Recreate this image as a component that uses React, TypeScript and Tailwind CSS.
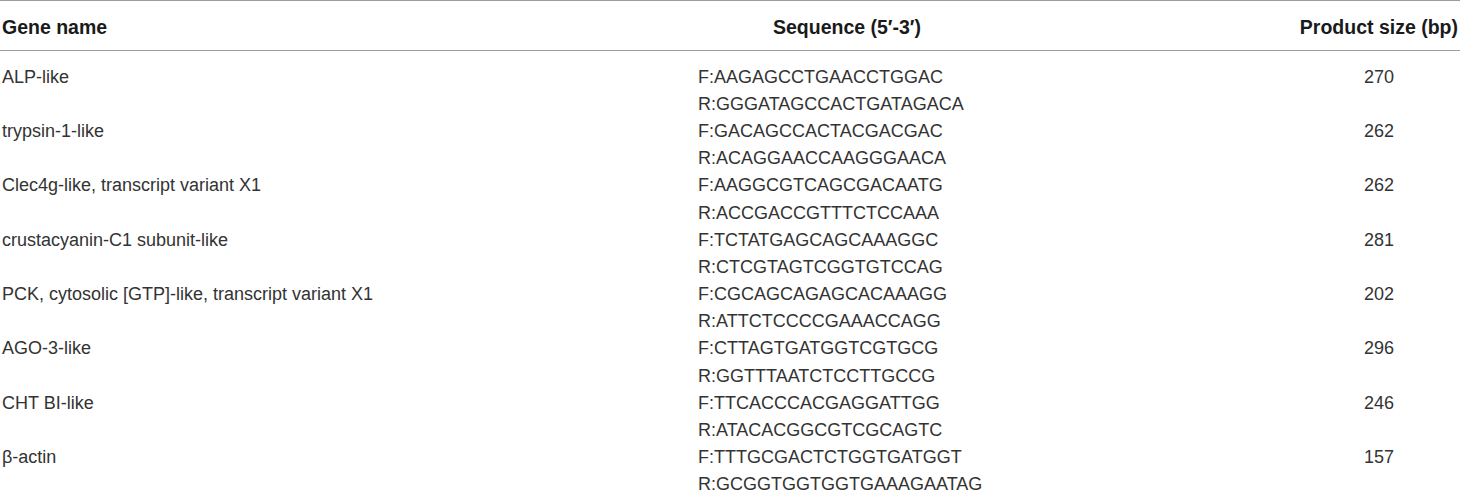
const rows = [
  { gene: "ALP-like", f: "F:AAGAGCCTGAACCTGGAC", r: "R:GGGATAGCCACTGATAGACA", size: "270" },
  { gene: "trypsin-1-like", f: "F:GACAGCCACTACGACGAC", r: "R:ACAGGAACCAAGGGAACA", size: "262" },
  { gene: "Clec4g-like, transcript variant X1", f: "F:AAGGCGTCAGCGACAATG", r: "R:ACCGACCGTTTCTCCAAA", size: "262" },
  { gene: "crustacyanin-C1 subunit-like", f: "F:TCTATGAGCAGCAAAGGC", r: "R:CTCGTAGTCGGTGTCCAG", size: "281" },
  { gene: "PCK, cytosolic [GTP]-like, transcript variant X1", f: "F:CGCAGCAGAGCACAAAGG", r: "R:ATTCTCCCCGAAACCAGG", size: "202" },
  { gene: "AGO-3-like", f: "F:CTTAGTGATGGTCGTGCG", r: "R:GGTTTAATCTCCTTGCCG", size: "296" },
  { gene: "CHT BI-like", f: "F:TTCACCCACGAGGATTGG", r: "R:ATACACGGCGTCGCAGTC", size: "246" },
  { gene: "β-actin", f: "F:TTTGCGACTCTGGTGATGGT", r: "R:GCGGTGGTGGTGAAAGAATAG", size: "157" },
];

function Line({ children }: { children: React.ReactNode }) {
  return <div className="h-[27.2px] flex items-center leading-[20px]">{children}</div>;
}

export default function App() {
  return (
    <div className="w-[1460px] h-[496px] bg-white overflow-hidden font-['Liberation_Sans',Arial,sans-serif]">
      <div className="h-px bg-[#9c9c9c]" />
      <div className="flex h-[49px] items-center pt-[4px] text-[19.5px] font-bold text-[#1a1a1a]">
        <div className="w-[698px] pl-[2px]">Gene name</div>
        <div className="w-[298px] text-center">Sequence (5′-3′)</div>
        <div className="flex-1 flex justify-end pr-[2px]">Product size (bp)</div>
      </div>
      <div className="h-px bg-[#9c9c9c]" />
      <div className="pt-[12px] text-[18px] text-[#333333]">
        {rows.map((row) => (
          <div key={row.gene} className="flex">
            <div className="w-[698px] pl-[2px]">
              <Line>{row.gene}</Line>
            </div>
            <div className="w-[298px] flex flex-col">
              <Line>{row.f}</Line>
              <Line>{row.r}</Line>
            </div>
            <div className="flex-1 flex justify-end">
              <div className="w-[162px] flex justify-center">
                <Line>{row.size}</Line>
              </div>
            </div>
          </div>
        ))}
      </div>
    </div>
  );
}
